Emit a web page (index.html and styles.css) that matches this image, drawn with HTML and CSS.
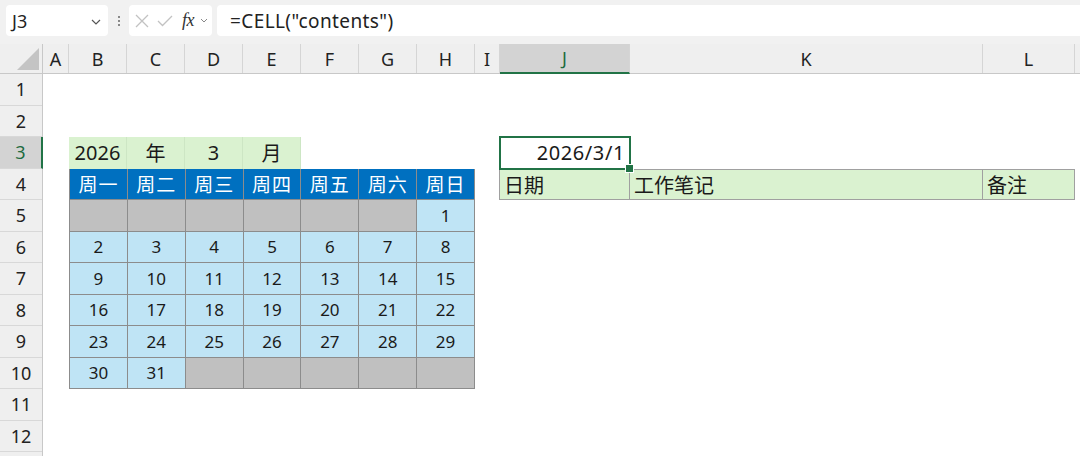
FILE: index.html
```html
<!DOCTYPE html>
<html lang="zh-CN">
<head>
<meta charset="utf-8">
<title>Sheet</title>
<link rel="stylesheet" href="styles.css">
</head>
<body>
<div class="app">
  <div class="toolbar">
    <div class="namebox">
      <span class="name">J3</span>
      <svg class="chev" width="10" height="6" viewBox="0 0 10 6"><path d="M1 1 L5 5 L9 1" fill="none" stroke="#555" stroke-width="1.2"/></svg>
    </div>
    <div class="dots"><span></span><span></span><span></span></div>
    <div class="fxbox">
      <svg class="ic-x" width="14" height="14" viewBox="0 0 14 14"><path d="M1 1 L13 13 M13 1 L1 13" stroke="#c2c2c2" stroke-width="1.3" fill="none"/></svg>
      <svg class="ic-ok" width="16" height="12" viewBox="0 0 16 12"><path d="M1 6 L5.5 10.5 L15 1" stroke="#c2c2c2" stroke-width="1.3" fill="none"/></svg>
      <span class="fx">fx</span>
      <svg class="chev-s" width="8" height="5" viewBox="0 0 8 5"><path d="M1 1 L4 4 L7 1" fill="none" stroke="#888" stroke-width="1"/></svg>
    </div>
    <div class="formula">=CELL("contents")</div>
  </div>

  <div class="sheet">
    <div class="corner"><div class="tri"></div></div>
    <div class="colheads">
      <div class="ch w26">A</div>
      <div class="ch w58">B</div>
      <div class="ch w58">C</div>
      <div class="ch w58">D</div>
      <div class="ch w58">E</div>
      <div class="ch w58">F</div>
      <div class="ch w58">G</div>
      <div class="ch w58">H</div>
      <div class="ch w25">I</div>
      <div class="ch w130 sel">J</div>
      <div class="ch w353">K</div>
      <div class="ch w92">L</div>
      <div class="ch fill"></div>
    </div>
    <div class="rowheads">
      <div class="rh">1</div>
      <div class="rh">2</div>
      <div class="rh sel">3</div>
      <div class="rh">4</div>
      <div class="rh">5</div>
      <div class="rh">6</div>
      <div class="rh">7</div>
      <div class="rh">8</div>
      <div class="rh">9</div>
      <div class="rh">10</div>
      <div class="rh">11</div>
      <div class="rh">12</div>
      <div class="rh last"></div>
    </div>
    <div class="body">
      <div class="cal">
        <div class="cal-title">
          <div class="tc">2026</div>
          <div class="tc">年</div>
          <div class="tc">3</div>
          <div class="tc">月</div>
        </div>
        <div class="cal-grid">
          <div class="wd">周一</div><div class="wd">周二</div><div class="wd">周三</div><div class="wd">周四</div><div class="wd">周五</div><div class="wd">周六</div><div class="wd">周日</div>
          <div class="dg"></div><div class="dg"></div><div class="dg"></div><div class="dg"></div><div class="dg"></div><div class="dg"></div><div class="d">1</div>
          <div class="d">2</div><div class="d">3</div><div class="d">4</div><div class="d">5</div><div class="d">6</div><div class="d">7</div><div class="d">8</div>
          <div class="d">9</div><div class="d">10</div><div class="d">11</div><div class="d">12</div><div class="d">13</div><div class="d">14</div><div class="d">15</div>
          <div class="d">16</div><div class="d">17</div><div class="d">18</div><div class="d">19</div><div class="d">20</div><div class="d">21</div><div class="d">22</div>
          <div class="d">23</div><div class="d">24</div><div class="d">25</div><div class="d">26</div><div class="d">27</div><div class="d">28</div><div class="d">29</div>
          <div class="d">30</div><div class="d">31</div><div class="dg"></div><div class="dg"></div><div class="dg"></div><div class="dg"></div><div class="dg"></div>
        </div>
      </div>
      <div class="j3">2026/3/1</div>
      <div class="notes">
        <div class="nc">日期</div>
        <div class="nc">工作笔记</div>
        <div class="nc">备注</div>
      </div>
    </div>
  </div>
</div>
</body>
</html>
```
FILE: styles.css
```css
* { box-sizing: border-box; }
html, body { margin: 0; padding: 0; background: #fff; }
body {
  font-family: "Noto Sans", "Noto Sans CJK SC", sans-serif;
  color: #222;
  width: 1080px;
  height: 456px;
  overflow: hidden;
}
.app { display: flex; flex-direction: column; height: 456px; }

/* toolbar */
.toolbar {
  height: 44px;
  flex: none;
  background: #f1f1f1;
  display: flex;
  align-items: flex-start;
  padding: 5px 0 0 6px;
  overflow: hidden;
}
.toolbar > * { flex: none; }
.namebox {
  width: 102px;
  height: 31px;
  background: #fff;
  border-radius: 4px;
  display: flex;
  align-items: center;
  justify-content: space-between;
  padding: 0 7px 0 6px;
}
.name { font-size: 18px; color: #222; }
.chev { margin-top: 2px; }
.dots {
  width: 21px;
  height: 31px;
  display: flex;
  flex-direction: column;
  align-items: center;
  justify-content: center;
  gap: 2px;
}
.dots span { width: 2px; height: 2px; background: #666; border-radius: 1px; }
.fxbox {
  width: 83px;
  height: 31px;
  background: #fff;
  border-radius: 4px;
  display: flex;
  align-items: center;
  padding-left: 6px;
}
.ic-ok { margin-left: 8px; }
.fx {
  font-family: "Liberation Serif", "DejaVu Serif", serif;
  font-style: italic;
  font-size: 18px;
  color: #333;
  margin-left: 9px;
  letter-spacing: -0.5px;
}
.chev-s { margin-left: 6px; }
.formula {
  width: 900px;
  height: 31px;
  margin-left: 5px;
  background: #fff;
  border-radius: 4px;
  font-size: 19px;
  letter-spacing: 0.4px;
  color: #222;
  display: flex;
  align-items: center;
  padding-left: 13px;
}

/* sheet */
.sheet {
  flex: 1;
  display: grid;
  grid-template-columns: 43px 1fr;
  grid-template-rows: 30px 1fr;
  overflow: hidden;
}
.corner {
  background: #efefef;
  border-right: 1px solid #c8c8c8;
  border-bottom: 1px solid #c8c8c8;
  position: relative;
}
.tri {
  position: absolute;
  right: 3px;
  bottom: 3px;
  width: 22px;
  height: 22px;
  background: #c4c4c4;
  clip-path: polygon(100% 0, 100% 100%, 0 100%);
}
.colheads {
  display: flex;
  background: #efefef;
  border-bottom: 1px solid #c8c8c8;
}
.ch {
  flex: none;
  display: flex;
  align-items: center;
  justify-content: center;
  font-size: 18px;
  color: #222;
  border-right: 1px solid #d5d5d5;
}
.ch.sel {
  background: #d3d3d3;
  color: #1e6b40;
  border-bottom: 2px solid #217346;
  margin-bottom: -1px;
}
.ch.fill { flex: 1; border-right: none; }
.w26 { width: 26px; }
.w58 { width: 58px; }
.w25 { width: 25px; }
.w130 { width: 130px; }
.w353 { width: 353px; }
.w92 { width: 92px; }

.rowheads {
  display: flex;
  flex-direction: column;
  background: #efefef;
  border-right: 1px solid #c8c8c8;
}
.rh {
  height: 31.5px;
  flex: none;
  display: flex;
  align-items: center;
  justify-content: center;
  font-size: 18px;
  color: #222;
  border-bottom: 1px solid #d8d8d8;
}
.rh.sel {
  background: #d3d3d3;
  color: #1e6b40;
  border-right: 2px solid #217346;
  margin-right: -1px;
}
.rh.last { flex: 1; border-bottom: none; }

.body {
  display: grid;
  grid-template-columns: 26px repeat(7, 58px) 25px 130px 353px 92px 1fr;
  grid-template-rows: repeat(12, 31.5px) 1fr;
}

/* calendar */
.cal {
  grid-column: 2 / 9;
  grid-row: 3 / 11;
  display: flex;
  flex-direction: column;
}
.cal-title {
  height: 31.5px;
  flex: none;
  display: grid;
  grid-template-columns: repeat(4, 58px);
}
.tc {
  background: #daf2d0;
  border-right: 1px solid #cde6c4;
  display: flex;
  align-items: center;
  justify-content: center;
  font-size: 20px;
  color: #1a1a1a;
}
.cal-grid {
  flex: 1;
  display: grid;
  grid-template-columns: repeat(7, 1fr);
  grid-template-rows: repeat(7, 1fr);
  gap: 1px;
  background: #8c8c8c;
  border: 1px solid #8c8c8c;
  border-top: none;
}
.wd {
  background: #0070c0;
  color: #fff;
  font-size: 19px;
  display: flex;
  align-items: center;
  justify-content: center;
  letter-spacing: 1px;
}
.d {
  background: #bfe4f5;
  display: flex;
  align-items: center;
  justify-content: center;
  font-size: 17px;
  color: #1a1a1a;
}
.dg { background: #c0c0c0; }

/* right side */
.j3 {
  grid-column: 10;
  grid-row: 3;
  position: relative;
  display: flex;
  align-items: center;
  justify-content: flex-end;
  padding-right: 5px;
  font-size: 20px;
  letter-spacing: 0.6px;
  color: #1a1a1a;
}
.j3::before {
  content: "";
  position: absolute;
  left: -1px;
  top: -1px;
  right: -1px;
  bottom: -1px;
  border: 2px solid #217346;
}
.j3::after {
  content: "";
  position: absolute;
  right: -4px;
  bottom: -4px;
  width: 7px;
  height: 7px;
  background: #217346;
  border: 1px solid #fff;
  z-index: 2;
}
.notes {
  grid-column: 10 / 13;
  grid-row: 4;
  display: grid;
  grid-template-columns: 130px 353px 92px;
  border-bottom: 1px solid #a0a0a0;
  border-left: 1px solid #a0a0a0;
  border-top: 1px solid #a0a0a0;
  margin-left: -1px;
}
.nc {
  background: #daf2d0;
  border-right: 1px solid #a0a0a0;
  display: flex;
  align-items: center;
  padding-left: 4px;
  font-size: 20px;
  color: #1a1a1a;
}
```
